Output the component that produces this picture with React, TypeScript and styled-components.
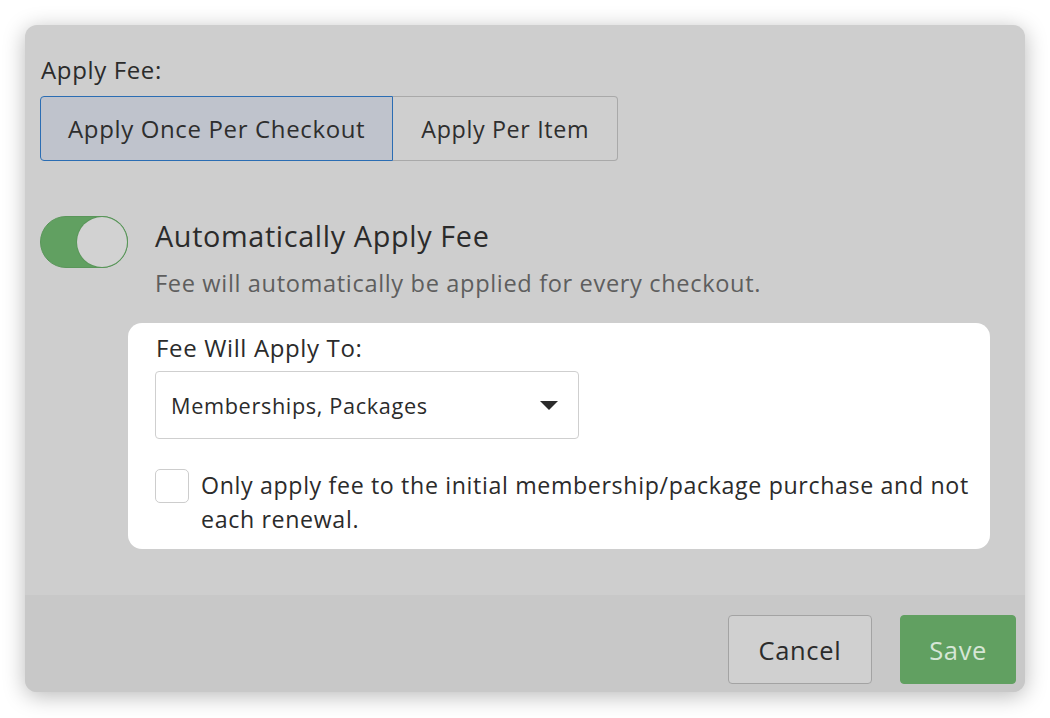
import { useState } from "react";
import styled, { createGlobalStyle } from "styled-components";

const GlobalStyle = createGlobalStyle`
    html, body {
        margin: 0;
        padding: 0;
        background: #ffffff;
        font-family: "Open Sans", "Liberation Sans", sans-serif;
        letter-spacing: 0.04em;
        color: #333;
    }
`;

const Page = styled.div`
    width: 1050px;
    height: 718px;
    padding: 25px;
    box-sizing: border-box;
`;

const Modal = styled.div`
    width: 1000px;
    height: 667px;
    border-radius: 12px;
    overflow: hidden;
    background: #cecece;
    box-shadow: 0 4px 22px rgba(0, 0, 0, 0.28);
    display: flex;
    flex-direction: column;
`;

const Body = styled.div`
    flex: 1;
    padding: 32px 35px 0 15px;
`;

const Label = styled.div`
    font-size: 24px;
    line-height: 26px;
    color: #2b2b2b;
    padding-left: 1px;
`;

const Segmented = styled.div`
    display: flex;
    margin-top: 13px;
`;

const Segment = styled.button<{ $active?: boolean }>`
    height: 65px;
    padding: 0 28px;
    font-family: inherit;
    letter-spacing: inherit;
    font-size: 23.3px;
    color: #2e2e2e;
    border: 1px solid ${(p) => (p.$active ? "#2b6db3" : "#a9a9a9")};
    background: ${(p) => (p.$active ? "#bfc3cc" : "#cfcfcf")};
    cursor: pointer;

    &:first-child {
        font-size: 24px;
        padding: 0 27px;
        border-radius: 4px 0 0 4px;
    }
    &:last-child {
        border-left: none;
        border-radius: 0 4px 4px 0;
    }
`;

const AutoRow = styled.div`
    display: flex;
    margin-top: 55px;
`;

const Toggle = styled.button<{ $on: boolean }>`
    flex: none;
    width: 88px;
    height: 52px;
    border-radius: 26px;
    border: 1px solid ${(p) => (p.$on ? "#5a965a" : "#aaa")};
    background: ${(p) => (p.$on ? "#61a061" : "#bbb")};
    position: relative;
    padding: 0;
    cursor: pointer;

    &::after {
        content: "";
        position: absolute;
        top: 0;
        ${(p) => (p.$on ? "right: 0;" : "left: 0;")}
        width: 50px;
        height: 50px;
        border-radius: 50%;
        background: #d2d2d2;
        box-shadow: 0 0 0 1px #5a965a;
    }
`;

const AutoContent = styled.div`
    flex: 1;
    display: flex;
    flex-direction: column;
`;

const Title = styled.div`
    padding-left: 27px;
    font-size: 28.8px;
    line-height: 40px;
    color: #2b2b2b;
`;

const Subtitle = styled.div`
    padding-left: 27px;
    margin-top: 14px;
    font-size: 23.6px;
    line-height: 26px;
    color: #5e5e5e;
`;

const Panel = styled.div`
    margin-top: 27px;
    background: #ffffff;
    border-radius: 14px;
    padding: 12px 16px 13px 27px;
`;

const Select = styled.div`
    margin-top: 10px;
    width: 424px;
    height: 68px;
    box-sizing: border-box;
    border: 1px solid #cfcfcf;
    border-radius: 4px;
    padding: 0 20px 0 15px;
    display: flex;
    align-items: center;
    justify-content: space-between;
    font-size: 21.7px;
    color: #2b2b2b;
    cursor: pointer;
`;

const Caret = styled.span`
    width: 0;
    height: 0;
    border-left: 9px solid transparent;
    border-right: 9px solid transparent;
    border-top: 9px solid #2b2b2b;
`;

const CheckRow = styled.label`
    display: flex;
    gap: 12px;
    margin-top: 29px;
    cursor: pointer;
`;

const Box = styled.span<{ $checked: boolean }>`
    flex: none;
    width: 34px;
    height: 34px;
    box-sizing: border-box;
    border: 1px solid #cdcdcd;
    border-radius: 5px;
    background: ${(p) => (p.$checked ? "#61a061" : "#fff")};
    margin-top: 1px;
`;

const CheckText = styled.span`
    font-size: 23.2px;
    line-height: 34px;
    color: #2b2b2b;
`;

const Footer = styled.div`
    flex: none;
    height: 97px;
    box-sizing: border-box;
    background: #c8c8c8;
    display: flex;
    justify-content: flex-end;
    align-items: flex-start;
    gap: 28px;
    padding: 20px 9px 0 0;
`;

const FooterButton = styled.button<{ $primary?: boolean }>`
    height: 69px;
    padding: 0 ${(p) => (p.$primary ? 28 : 30)}px;
    font-family: inherit;
    letter-spacing: inherit;
    font-size: 25.5px;
    border-radius: 4px;
    cursor: pointer;
    border: 1px solid ${(p) => (p.$primary ? "#61a061" : "#a3a3a3")};
    background: ${(p) => (p.$primary ? "#61a061" : "#d0d0d0")};
    color: ${(p) => (p.$primary ? "#d6e6d6" : "#2b2b2b")};
`;

const App = () => {
    const [mode, setMode] = useState("once");
    const [auto, setAuto] = useState(true);
    const [initialOnly, setInitialOnly] = useState(false);

    return (
        <>
            <GlobalStyle />
            <Page>
                <Modal>
                    <Body>
                        <Label>Apply Fee:</Label>
                        <Segmented>
                            <Segment $active={mode === "once"} onClick={() => setMode("once")}>
                                Apply Once Per Checkout
                            </Segment>
                            <Segment $active={mode === "item"} onClick={() => setMode("item")}>
                                Apply Per Item
                            </Segment>
                        </Segmented>
                        <AutoRow>
                            <Toggle $on={auto} onClick={() => setAuto(!auto)} aria-label="toggle" />
                            <AutoContent>
                                <Title>Automatically Apply Fee</Title>
                                <Subtitle>Fee will automatically be applied for every checkout.</Subtitle>
                                <Panel>
                                    <Label>Fee Will Apply To:</Label>
                                    <Select>
                                        <span>Memberships, Packages</span>
                                        <Caret />
                                    </Select>
                                    <CheckRow onClick={() => setInitialOnly(!initialOnly)}>
                                        <Box $checked={initialOnly} />
                                        <CheckText>
                                            Only apply fee to the initial membership/package purchase and not each renewal.
                                        </CheckText>
                                    </CheckRow>
                                </Panel>
                            </AutoContent>
                        </AutoRow>
                    </Body>
                    <Footer>
                        <FooterButton>Cancel</FooterButton>
                        <FooterButton $primary>Save</FooterButton>
                    </Footer>
                </Modal>
            </Page>
        </>
    );
};

export default App;
